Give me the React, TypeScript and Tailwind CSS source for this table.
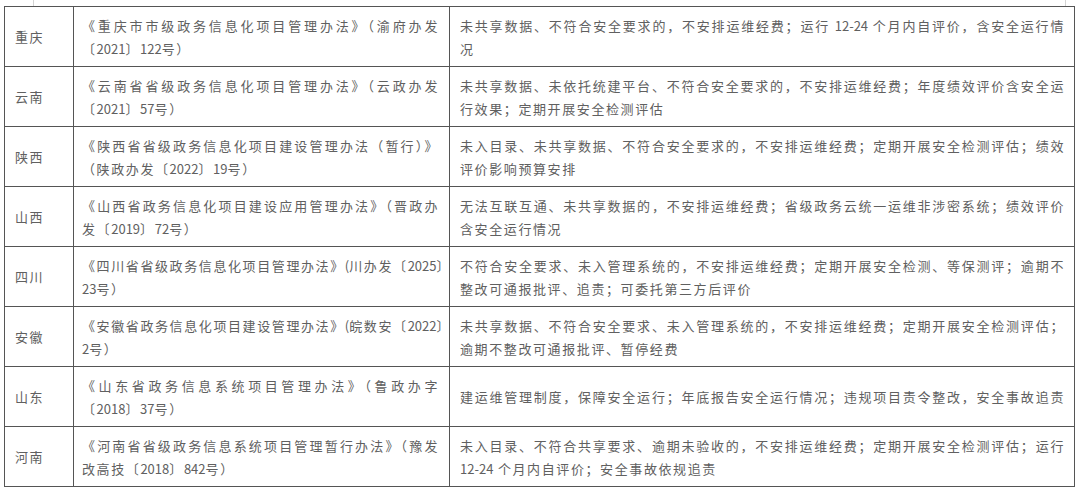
import type { ReactNode } from 'react'

interface Row {
  province: string
  law: string[]
  rule: string[]
  ruleFull?: boolean
}

const rows: Row[] = [
  {
    province: '重庆',
    law: ['《重庆市市级政务信息化项目管理办法》（渝府办发', '〔2021〕122号）'],
    rule: ['未共享数据、不符合安全要求的，不安排运维经费；运行 12-24 个月内自评价，含安全运行情', '况'],
  },
  {
    province: '云南',
    law: ['《云南省省级政务信息化项目管理办法》（云政办发', '〔2021〕57号）'],
    rule: ['未共享数据、未依托统建平台、不符合安全要求的，不安排运维经费；年度绩效评价含安全运', '行效果；定期开展安全检测评估'],
  },
  {
    province: '陕西',
    law: ['《陕西省省级政务信息化项目建设管理办法（暂行）》', '（陕政办发〔2022〕19号）'],
    rule: ['未入目录、未共享数据、不符合安全要求的，不安排运维经费；定期开展安全检测评估；绩效', '评价影响预算安排'],
  },
  {
    province: '山西',
    law: ['《山西省政务信息化项目建设应用管理办法》（晋政办', '发〔2019〕72号）'],
    rule: ['无法互联互通、未共享数据的，不安排运维经费；省级政务云统一运维非涉密系统；绩效评价', '含安全运行情况'],
  },
  {
    province: '四川',
    law: ['《四川省省级政务信息化项目管理办法》(川办发〔2025〕', '23号）'],
    rule: ['不符合安全要求、未入管理系统的，不安排运维经费；定期开展安全检测、等保测评；逾期不', '整改可通报批评、追责；可委托第三方后评价'],
  },
  {
    province: '安徽',
    law: ['《安徽省政务信息化项目建设管理办法》(皖数安〔2022〕', '2号）'],
    rule: ['未共享数据、不符合安全要求、未入管理系统的，不安排运维经费；定期开展安全检测评估；', '逾期不整改可通报批评、暂停经费'],
  },
  {
    province: '山东',
    law: ['《山东省政务信息系统项目管理办法》（鲁政办字', '〔2018〕37号）'],
    rule: ['建运维管理制度，保障安全运行；年底报告安全运行情况；违规项目责令整改，安全事故追责'],
    ruleFull: true,
  },
  {
    province: '河南',
    law: ['《河南省省级政务信息系统项目管理暂行办法》（豫发', '改高技〔2018〕842号）'],
    rule: ['未入目录、不符合共享要求、逾期未验收的，不安排运维经费；定期开展安全检测评估；运行', '12-24 个月内自评价；安全事故依规追责'],
  },
]

// digits and latin get no extra tracking, like the half-width runs in the source
function runs(text: string): ReactNode[] {
  return text.split(/([\x21-\x7e]+)/).map((part, i) =>
    /^[\x21-\x7e]+$/.test(part) ? (
      <span key={i} className="tracking-normal">
        {part}
      </span>
    ) : (
      part
    ),
  )
}

function Lines({ lines, full }: { lines: string[]; full?: boolean }) {
  return (
    <>
      {lines.map((line, i) => {
        const justify = full || i < lines.length - 1
        return (
          <div
            key={i}
            className={justify ? 'whitespace-nowrap [text-align-last:justify] text-justify' : 'whitespace-nowrap'}
          >
            {runs(line)}
          </div>
        )
      })}
    </>
  )
}

export default function App() {
  return (
    <div
      className="w-[1080px] h-[491px] bg-white text-[#606060] text-[13px] leading-[23px] tracking-[1.6px] overflow-hidden"
      style={{ fontFamily: '"Noto Sans CJK SC", "Noto Sans", sans-serif' }}
    >
      {/* page corner marks */}
      <div className="h-[6px] flex justify-between pl-[33px] pr-[14px]">
        <div className="w-px h-full bg-[#d4d4d4]"></div>
        <div className="w-px h-full bg-[#d4d4d4]"></div>
      </div>

      <table className="ml-[4px] border-collapse table-fixed w-[1070px]">
        <colgroup>
          <col className="w-[69px]" />
          <col className="w-[376px]" />
          <col className="w-[625px]" />
        </colgroup>
        <tbody>
          {rows.map((row) => (
            <tr key={row.province} className="h-[60px]">
              <td className="border border-[#555] align-middle pl-[10px] pr-1 tracking-[1.5px]">
                {row.province}
              </td>
              <td className="border border-[#555] align-middle pl-[8px] pr-[10px]">
                <Lines lines={row.law} />
              </td>
              <td className="border border-[#555] align-middle pl-[10px] pr-[9px]">
                <Lines lines={row.rule} full={row.ruleFull} />
              </td>
            </tr>
          ))}
        </tbody>
      </table>
    </div>
  )
}
